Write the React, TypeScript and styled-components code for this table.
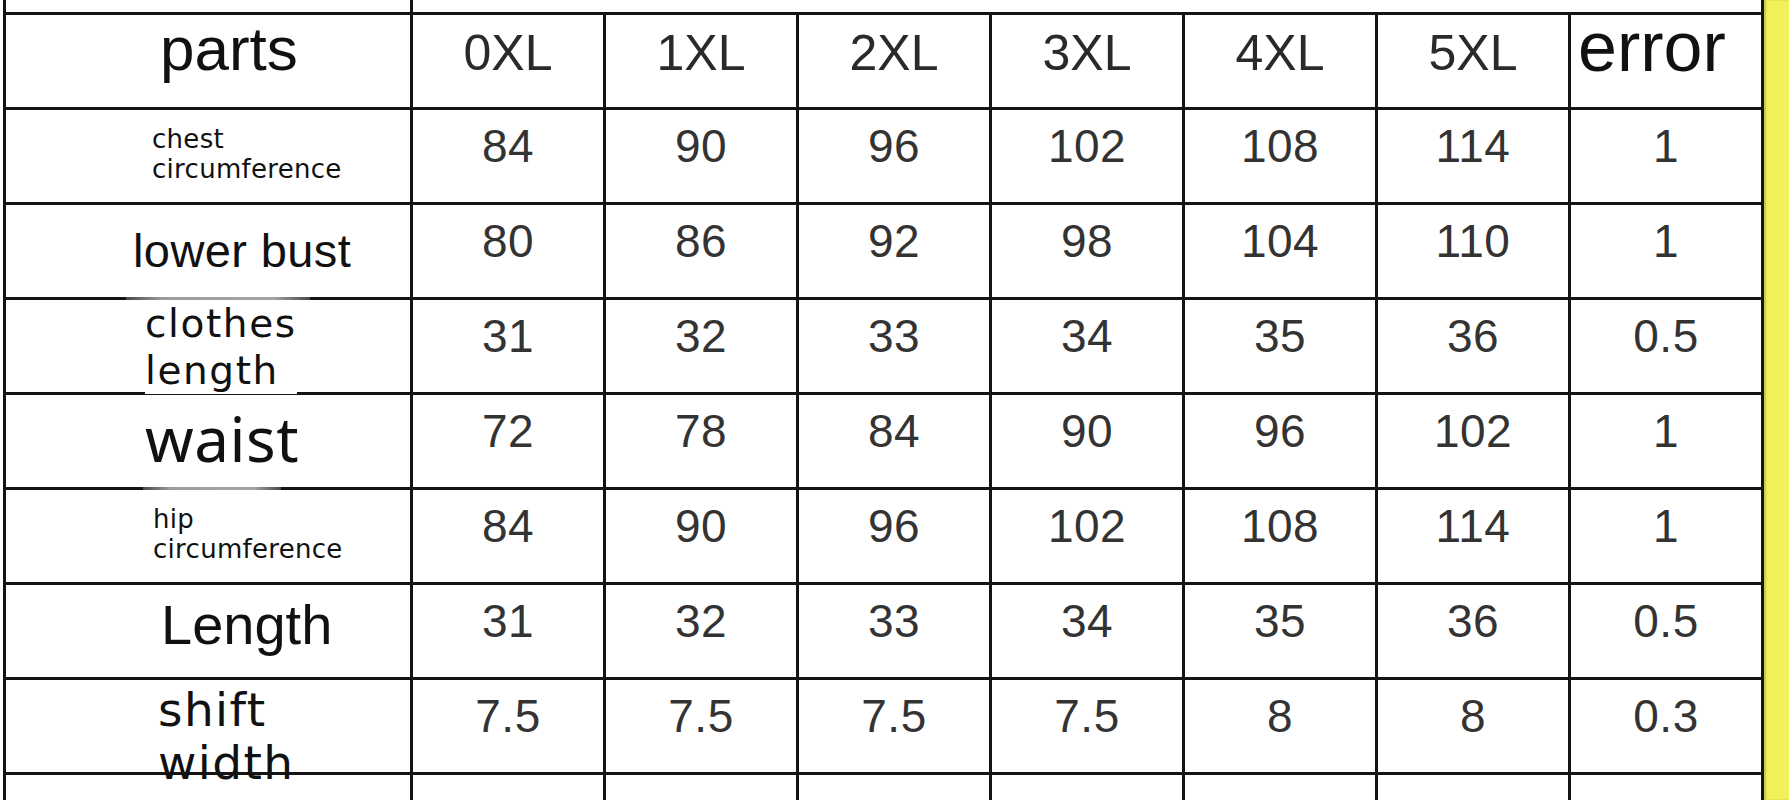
import styled, { createGlobalStyle } from 'styled-components';

const GlobalStyle = createGlobalStyle`
  html, body {
    margin: 0;
    padding: 0;
    background: #ffffff;
  }
  body {
    font-family: "Liberation Sans", Arial, sans-serif;
    color: #111;
  }
`;

interface Part {
  lines: string[];
  font: string;
  size: number;
  lh: number;
  top: number;
  indent: number;
  spacing?: number;
  cover?: boolean;
  smudge?: { left: number; width: number };
  values: string[];
}

const SIZES = ['0XL', '1XL', '2XL', '3XL', '4XL', '5XL'];

const PARTS: Part[] = [
  {
    lines: ['chest', 'circumference'],
    font: '"DejaVu Sans", sans-serif',
    size: 26, lh: 30, top: 14, indent: 146, spacing: 0.3,
    values: ['84', '90', '96', '102', '108', '114', '1'],
  },
  {
    lines: ['lower bust'],
    font: '"Liberation Sans", Arial, sans-serif',
    size: 47, lh: 46, top: 23, indent: 127, spacing: 0.4,
    values: ['80', '86', '92', '98', '104', '110', '1'],
  },
  {
    lines: ['clothes', 'length'],
    font: '"DejaVu Sans", sans-serif',
    size: 39, lh: 47, top: 0, indent: 139, spacing: 1.6,
    cover: true,
    smudge: { left: 120, width: 184 },
    values: ['31', '32', '33', '34', '35', '36', '0.5'],
  },
  {
    lines: ['waist'],
    font: '"Noto Sans", sans-serif',
    size: 62, lh: 58, top: 14, indent: 139, spacing: 0.5,
    values: ['72', '78', '84', '90', '96', '102', '1'],
  },
  {
    lines: ['hip', 'circumference'],
    font: '"DejaVu Sans", sans-serif',
    size: 26, lh: 30, top: 14, indent: 147, spacing: 0.3,
    smudge: { left: 137, width: 138 },
    values: ['84', '90', '96', '102', '108', '114', '1'],
  },
  {
    lines: ['Length'],
    font: '"Liberation Sans", Arial, sans-serif',
    size: 56, lh: 56, top: 12, indent: 155,
    values: ['31', '32', '33', '34', '35', '36', '0.5'],
  },
  {
    lines: ['shift', 'width'],
    font: '"DejaVu Sans", sans-serif',
    size: 47, lh: 53, top: 3, indent: 152, spacing: 1.4,
    values: ['7.5', '7.5', '7.5', '7.5', '8', '8', '0.3'],
  },
];

export default function App() {
  return (
    <>
      <GlobalStyle />
      <Page>
        <Sheet>
          <Cell />
          <TitleCell />

          <LabelCell $top={3} $indent={154}>
            <LabelText $font='"Liberation Sans", Arial, sans-serif' $size={62} $lh={62}>
              parts
            </LabelText>
          </LabelCell>
          {SIZES.map((s) => (
            <SizeCell key={s}>{s}</SizeCell>
          ))}
          <LabelCell $top={0} $indent={7}>
            <LabelText $font='"Liberation Sans", Arial, sans-serif' $size={70} $lh={64}>
              error
            </LabelText>
          </LabelCell>

          {PARTS.map((p) => (
            <Row key={p.lines.join(' ')} part={p} />
          ))}

          {Array.from({ length: 8 }).map((_, i) => (
            <Cell key={i} />
          ))}
        </Sheet>
        <Edge />
      </Page>
    </>
  );
}

const Row = ({ part }: { part: Part }) => (
  <>
    <LabelCell $top={part.top} $indent={part.indent}>
      {part.smudge && <Smudge style={{ left: part.smudge.left, width: part.smudge.width }} />}
      <LabelText
        $font={part.font}
        $size={part.size}
        $lh={part.lh}
        $spacing={part.spacing}
        $cover={part.cover}
      >
        {part.lines.map((l) => (
          <span key={l}>{l}</span>
        ))}
      </LabelText>
    </LabelCell>
    {part.values.map((v, i) => (
      <NumCell key={i}>{v}</NumCell>
    ))}
  </>
);

const Page = styled.div`
  display: flex;
  height: 800px;
  overflow: hidden;
  padding-left: 3px;
  background: #fff;
`;

const Sheet = styled.div`
  display: grid;
  grid-template-columns: 404px repeat(7, 190px);
  grid-template-rows: 12px repeat(8, 92px) 40px;
  column-gap: 3px;
  row-gap: 3px;
  padding: 0 3px;
  background: #141414;
  align-content: start;
`;

const Cell = styled.div`
  background: #fff;
`;

const TitleCell = styled(Cell)`
  grid-column: 2 / -1;
`;

const SizeCell = styled(Cell)`
  display: flex;
  align-items: center;
  justify-content: center;
  padding-bottom: 17px;
  font-family: "Liberation Sans", Arial, sans-serif;
  font-size: 50px;
  color: #2a2a2a;
`;

const NumCell = styled(Cell)`
  display: flex;
  align-items: center;
  justify-content: center;
  padding-bottom: 20px;
  font-family: "Liberation Sans", Arial, sans-serif;
  font-size: 46px;
  letter-spacing: 0.5px;
  color: #333;
`;

const LabelCell = styled(Cell)<{ $top: number; $indent: number }>`
  position: relative;
  display: flex;
  align-items: flex-start;
  padding-top: ${(p) => p.$top}px;
  padding-left: ${(p) => p.$indent}px;
`;

const LabelText = styled.div<{
  $font: string;
  $size: number;
  $lh: number;
  $spacing?: number;
  $cover?: boolean;
}>`
  position: relative;
  z-index: 2;
  display: flex;
  flex-direction: column;
  font-family: ${(p) => p.$font};
  font-size: ${(p) => p.$size}px;
  line-height: ${(p) => p.$lh}px;
  letter-spacing: ${(p) => p.$spacing ?? 0}px;
  white-space: nowrap;
  color: #111;
  background: ${(p) => (p.$cover ? '#fff' : 'transparent')};
`;

const Smudge = styled.div`
  position: absolute;
  top: -3px;
  height: 3px;
  z-index: 1;
  background: linear-gradient(to right, rgba(150, 150, 150, 0.4), #9c9c9c 20%, #a4a4a4 80%, rgba(150, 150, 150, 0.4));
`;

const Edge = styled.div`
  flex: 1;
  background: #f1f15b;
  box-shadow: inset 2px 0 2px rgba(120, 120, 30, 0.35);
`;
